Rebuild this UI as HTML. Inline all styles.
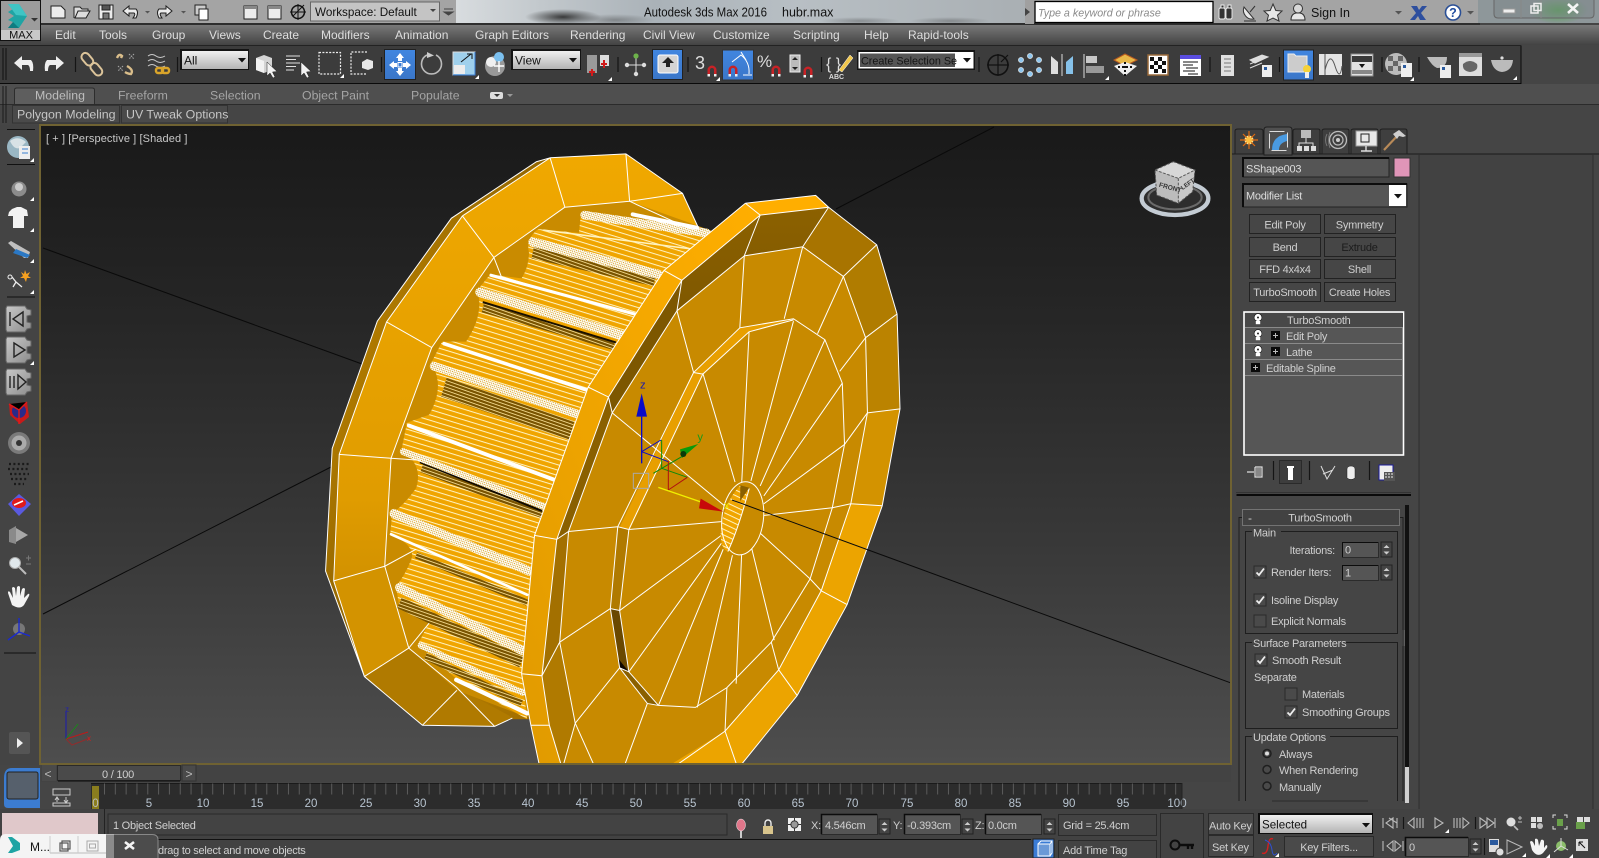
<!DOCTYPE html>
<html><head><meta charset="utf-8"><style>
html,body{margin:0;padding:0;background:#454545;width:1599px;height:858px;overflow:hidden}
svg{display:block}
text{font-family:"Liberation Sans",sans-serif;font-size:12px;fill:#d2d2d2}
.m{fill:#dedede;font-size:12px}
.t{fill:#111;font-size:12.5px}
.r{fill:#a5a5a5;font-size:12.3px}
.l{fill:#cfcfcf;font-size:11px;letter-spacing:-.25px}
.c{text-anchor:middle}
.e{text-anchor:end}
.w{fill:none;stroke:#fff;stroke-width:1;vector-effect:non-scaling-stroke}
.k{fill:none;stroke:#111;stroke-width:1}
.gb{fill:none;stroke:#1e1e1e;stroke-width:1}
.bt{fill:#464646;stroke:#222;stroke-width:1}
.inp{fill:#555;stroke:#2b2b2b}
.ic{fill:none;stroke:#e8e8e8;stroke-width:1.4}
.sep{stroke:#151515;stroke-width:1.2}
</style></head><body>
<svg width="1599" height="858" viewBox="0 0 1599 858" xmlns="http://www.w3.org/2000/svg">
<defs>
<linearGradient id="vp" x1="0" y1="0" x2="0" y2="1"><stop offset="0" stop-color="#191919"/><stop offset=".3" stop-color="#262626"/><stop offset=".65" stop-color="#383838"/><stop offset="1" stop-color="#4e4e4e"/></linearGradient>
<linearGradient id="menu" x1="0" y1="0" x2="0" y2="1"><stop offset="0" stop-color="#787878"/><stop offset="1" stop-color="#434343"/></linearGradient>
<linearGradient id="dd" x1="0" y1="0" x2="0" y2="1"><stop offset="0" stop-color="#f0f0f0"/><stop offset="1" stop-color="#b4b4b4"/></linearGradient>
<linearGradient id="glass" x1="0" y1="0" x2="1" y2="0"><stop offset="0" stop-color="#d8dcdf"/><stop offset=".15" stop-color="#c2c8cc"/><stop offset=".35" stop-color="#aab2b8"/><stop offset=".6" stop-color="#b8bfc4"/><stop offset="1" stop-color="#a9afb3"/></linearGradient>
<radialGradient id="blob"><stop offset="0" stop-color="#2a2a2a" stop-opacity=".9"/><stop offset="1" stop-color="#2a2a2a" stop-opacity="0"/></radialGradient>
<radialGradient id="gblob"><stop offset="0" stop-color="#4ea64a"/><stop offset="1" stop-color="#4ea64a" stop-opacity="0"/></radialGradient>
<linearGradient id="ring" x1="0" y1="0" x2="0" y2="1"><stop offset="0" stop-color="#f0a800"/><stop offset=".6" stop-color="#e09c00"/><stop offset=".85" stop-color="#c88a00"/><stop offset="1" stop-color="#a06e00"/></linearGradient>
<linearGradient id="bev" x1="0" y1="0" x2="1" y2="1"><stop offset="0" stop-color="#d49300"/><stop offset=".55" stop-color="#8a6000"/><stop offset="1" stop-color="#6e4c00"/></linearGradient>
<linearGradient id="br" x1="0" y1="0" x2="0" y2="1"><stop offset="0" stop-color="#8c6100"/><stop offset="1" stop-color="#7f5800"/></linearGradient>
<linearGradient id="strip" x1="1" y1="0" x2="0" y2="1"><stop offset="0" stop-color="#ffae00"/><stop offset=".6" stop-color="#eda300"/><stop offset="1" stop-color="#e09a00"/></linearGradient>
<linearGradient id="blubtn" x1="0" y1="0" x2="0" y2="1"><stop offset="0" stop-color="#4186e0"/><stop offset="1" stop-color="#3a76c8"/></linearGradient>
<pattern id="hatch" patternUnits="userSpaceOnUse" width="30" height="13" patternTransform="rotate(16)"><rect width="30" height="13" fill="#f0a500"/><rect y="0" width="30" height="2.6" fill="#fff2c0"/></pattern>
<pattern id="hatchd" patternUnits="userSpaceOnUse" width="30" height="8" patternTransform="rotate(18)"><rect width="30" height="8" fill="#7a5400"/><rect y="0" width="30" height="2.2" fill="#f5dc90"/></pattern>
<pattern id="hatchw" patternUnits="userSpaceOnUse" width="5" height="5" patternTransform="rotate(18)"><rect width="5" height="5" fill="#fff"/><rect width="2.6" height="2.6" fill="#d49a10"/></pattern>
<g id="cr"><path d="M0 4L4 0V4Z" fill="#fff"/></g>
<g id="mag"><path d="M-4.5 5V-1A4.5 4.5 0 0 1 4.5 -1V5H2V-1A2 2 0 0 0 -2 -1V5Z" fill="#c82226"/><rect x="-4.5" y="3" width="2.5" height="2.5" fill="#eee"/><rect x="2" y="3" width="2.5" height="2.5" fill="#eee"/></g>
<linearGradient id="gg" x1="0" y1="0" x2="1" y2="1"><stop offset="0" stop-color="#c8c8c8"/><stop offset="1" stop-color="#8c8c8c"/></linearGradient>
<g id="gear"><path d="M-11 -13H7L9 -10L13 -9V-4L9 -3V3L13 4V9L9 10L7 13H-11L-12 11V-11Z" fill="url(#gg)" stroke="#666"/></g>
<g id="ch"><rect x="0" y="0" width="12" height="12" fill="#4a4a4a" stroke="#2a2a2a"/></g>
<g id="tick"><path d="M2.5 6.5L5 9L10 2.5" fill="none" stroke="#eee" stroke-width="1.8"/></g>
<g id="spin"><rect x="0" y="0" width="11" height="15" fill="#444" stroke="#222"/><path d="M2.5 6L5.5 3L8.5 6ZM2.5 9.5L5.5 12.5L8.5 9.5Z" fill="#ccc"/></g>
<g id="bulb"><circle cx="0" cy="-1.5" r="3.9" fill="#fff" stroke="#111" stroke-width=".6"/><rect x="-2.2" y="2" width="4.4" height="3.2" fill="#fff"/><circle cx="0" cy="-1.5" r="1" fill="#222"/></g>
<g id="plus"><rect x="-4.5" y="-4.5" width="9" height="9" fill="#0a0a0a"/><path d="M-2.5 0H2.5M0 -2.5V2.5" stroke="#bbb"/></g>
<clipPath id="vc"><rect x="41" y="126" width="1189" height="637"/></clipPath>
</defs>

<!-- base -->
<rect width="1599" height="858" fill="#454545"/>

<!-- title bar -->
<rect x="0" y="0" width="1599" height="23" fill="#a4a4a4"/>
<rect x="456" y="0" width="570" height="23" fill="url(#glass)"/>
<ellipse cx="563" cy="17" rx="38" ry="8" fill="url(#blob)"/>
<ellipse cx="615" cy="20" rx="40" ry="6" fill="url(#blob)" opacity=".4"/>
<ellipse cx="860" cy="21" rx="40" ry="4" fill="url(#blob)" opacity=".35"/>
<ellipse cx="950" cy="21" rx="40" ry="4" fill="url(#blob)" opacity=".35"/>
<rect x="1478" y="0" width="121" height="23" fill="#8e979a"/>
<ellipse cx="1558" cy="10" rx="30" ry="14" fill="url(#gblob)"/>
<rect x="0" y="23" width="1480" height="2" fill="#2e2e2e"/>
<path d="M1494 0V14Q1494 18 1498 18H1590Q1594 18 1594 14V0" fill="#7d878a" fill-opacity=".55" stroke="#666"/>
<path d="M1521 0V18M1541 0V18" stroke="#888"/>
<rect x="1503" y="9" width="12" height="4" fill="#eee" stroke="#999"/>
<rect x="1531" y="6" width="7" height="7" fill="none" stroke="#eee" stroke-width="1.5"/><rect x="1534" y="3.5" width="7" height="7" fill="none" stroke="#eee" stroke-width="1.5"/>
<path d="M1568 4L1578 13M1578 4L1568 13" stroke="#f4f4f4" stroke-width="2.6"/>

<text class="t" x="644" y="16.5" textLength="123" lengthAdjust="spacingAndGlyphs">Autodesk 3ds Max 2016</text>
<text class="t" x="782" y="16.5">hubr.max</text>
<rect x="1025" y="0" width="9" height="24" fill="#a0a0a0"/><path d="M1025 8L1030 12L1025 16Z" fill="#444"/>
<rect x="1035" y="1.5" width="178" height="21" fill="#fff" stroke="#000" stroke-width="1.3"/>
<text x="1038" y="16.5" style="font-style:italic;font-size:10.7px;fill:#8a8a8a">Type a keyword or phrase</text>
<!-- right title icons -->
<g fill="#333" stroke="#eee" stroke-width=".9">
<rect x="1219" y="8" width="6" height="11" rx="1.5"/><rect x="1226" y="8" width="6" height="11" rx="1.5"/><path d="M1221 5H1224V8H1221ZM1228 5H1231V8H1228Z"/>
</g>
<path d="M1244 7A9 9 0 0 0 1254 19L1244 7ZM1250 12L1255 6M1244 21H1256" fill="#e8e8e8" stroke="#333"/>
<path d="M1273 4L1275.8 10.5L1282 11L1277.5 15.2L1279 21L1273 18L1267 21L1268.5 15.2L1264 11L1270.2 10.5Z" fill="#e6e6e6" stroke="#333"/>
<circle cx="1298" cy="8.5" r="4.5" fill="#d8d8d8" stroke="#333"/><path d="M1291 20Q1291 14 1296 13H1300Q1305 14 1305 20Z" fill="#e6e6e6" stroke="#333"/>
<text class="t" x="1311" y="17">Sign In</text>
<path d="M1395 11H1402L1398.5 14.5Z" fill="#555"/>
<path d="M1411 6H1417L1419 10L1422 6H1427L1421 13L1426 20H1420L1418 16L1415 20H1410L1416 13Z" fill="#2e4f9e"/>
<circle cx="1453" cy="12.5" r="7.5" fill="#fff" stroke="#2a4f96" stroke-width="1.6"/><text x="1453" y="17" class="c" style="fill:#1f4ca0;font-weight:bold;font-size:12.5px">?</text>
<path d="M1467 11H1474L1470.5 14.5Z" fill="#555"/>

<!-- left title icons -->
<g fill="#ececec" stroke="#222" stroke-width="1">
<path d="M51 6H61L65 10V18H51Z"/>
<path d="M74 18V7H80L82 9H88V11H78L75 18H86L90 11H79" fill="#ddd"/>
<rect x="99" y="5" width="14" height="14"/><rect x="102" y="5" width="8" height="5" fill="#555"/><rect x="103" y="13" width="6" height="6" fill="#777"/>
<path d="M123 11L129 6V9H136Q139 12 136 18H133Q136 14 134 13H129V16Z"/>
<path d="M172 11L166 6V9H159Q156 12 159 18H162Q159 14 161 13H166V16Z"/>
<rect x="195" y="5" width="11" height="10" fill="#ccc"/><rect x="199" y="9" width="9" height="11" fill="#fff"/>
<rect x="244" y="6" width="13" height="13"/><rect x="268" y="6" width="13" height="13"/>
</g>
<path d="M244 6H257V9H244ZM268 6H281V9H268Z" fill="#888"/>
<path d="M145 11H150L147.5 13.5ZM181 11H186L183.5 13.5Z" fill="#555"/>
<circle cx="298" cy="12" r="6.5" fill="none" stroke="#111" stroke-width="1.5"/><path d="M290 12H306M298 4V20M293 16L304 5" stroke="#111"/>
<rect x="310.5" y="2" width="129" height="19" fill="#c4c4c4" stroke="#666"/>
<text x="315" y="16" style="fill:#111;font-size:11.7px">Workspace: Default</text>
<path d="M430 9H436L433 12Z" fill="#444"/>
<path d="M444 9H453M444 12H453L448.5 15Z" fill="#444" stroke="#444"/>

<!-- app button -->
<rect x="0.5" y="0.5" width="40" height="40" fill="#a9a9a9" stroke="#111"/>
<rect x="1" y="1" width="39" height="29" fill="#9c9c9c"/>
<rect x="1" y="30" width="39" height="10" fill="#c8c8c8"/>
<path d="M8 4H19L27 16L19 28H8L13 22L8 20L14 16L8 12L13 9Z" fill="#1fa4a4"/><path d="M8 4H19L27 16L16 15Z" fill="#3fc4c4"/><path d="M13 22L19 28H8Z" fill="#0e7c80"/>
<path d="M31 18H38L34.5 21.5Z" fill="#333"/>
<text x="21" y="38.5" class="c" style="fill:#111;font-size:11px">MAX</text>

<!-- menu bar -->
<rect x="41" y="25" width="1558" height="20" fill="url(#menu)"/>
<rect x="0" y="41" width="41" height="4" fill="#454545"/>
<text class="m" x="55" y="39">Edit</text><text class="m" x="99" y="39">Tools</text><text class="m" x="152" y="39">Group</text><text class="m" x="209" y="39">Views</text><text class="m" x="263" y="39">Create</text><text class="m" x="321" y="39">Modifiers</text><text class="m" x="395" y="39">Animation</text><text class="m" x="475" y="39">Graph Editors</text><text class="m" x="570" y="39">Rendering</text><text class="m" x="643" y="39">Civil View</text><text class="m" x="713" y="39">Customize</text><text class="m" x="793" y="39">Scripting</text><text class="m" x="864" y="39">Help</text><text class="m" x="908" y="39">Rapid-tools</text>

<!-- toolbar -->
<rect x="0" y="45" width="1521" height="38" fill="#3c3c3c"/>
<rect x="1521" y="45" width="78" height="38" fill="#454545"/>
<path d="M0 83.5H1521V45.5" stroke="#0a0a0a" fill="none"/>
<rect x="0" y="45" width="1521" height="1" fill="#222"/>
<path d="M3 48V80M6 48V80" stroke="#111"/>
<path d="M14 63L22 56V60H31Q34 63 33 71H30Q30 66 28 65H22V70Z" fill="#eee"/>
<path d="M64 63L56 56V60H47Q44 63 45 71H48Q48 66 50 65H56V70Z" fill="#eee"/>
<line class="sep" x1="75.5" y1="57" x2="75.5" y2="72"/>
<g fill="none" stroke="#dcc49a" stroke-width="2"><rect x="-4" y="-8" width="8" height="14" rx="4" transform="translate(88 60) rotate(-40)"/><rect x="-4" y="-8" width="8" height="14" rx="4" transform="translate(97 70) rotate(-40)"/></g>
<path d="M117 58Q119 53 122 56L121 58M127 66Q134 70 131 74Q128 74 125 72" fill="none" stroke="#d9bd8a" stroke-width="2.4"/>
<path d="M129 54L134 59M134 54L129 59M118 66L123 71M123 66L118 71" stroke="#aaa" stroke-dasharray="1.5 1"/>
<path d="M148 56Q152 53 156 56T165 56M148 61Q152 58 156 61T165 61M148 66Q152 63 156 66T165 66" fill="none" stroke="#ccc"/>
<g fill="none" stroke="#d9a42a" stroke-width="2.4"><rect x="156" y="68" width="7" height="5" rx="2"/><rect x="162" y="68" width="7" height="5" rx="2"/></g>
<line class="sep" x1="177.5" y1="57" x2="177.5" y2="72"/>
<rect x="180" y="49" width="69" height="21" fill="#141414"/><rect x="182" y="51" width="66" height="18" fill="url(#dd)"/>
<text x="184" y="64.5" style="fill:#111;font-size:12px">All</text><path d="M238 58H246L242 62.5Z" fill="#111"/>
<path d="M256 58L264 55L272 58V70L264 73L256 70Z" fill="#d4d4d4"/><path d="M256 58L264 61V73L256 70Z" fill="#f2f2f2"/>
<path d="M267 62V76L270 73L273 78L275 77L272.5 72L277 71.5Z" fill="#f2f2f2" stroke="#222" stroke-width=".5"/>
<path d="M286 56H300M286 59.5H296M286 63H300M286 66.5H296M286 70H294" stroke="#e0e0e0"/>
<path d="M301 62V76L304 73L307 78L309 77L306.5 72L311 71.5Z" fill="#f2f2f2" stroke="#222" stroke-width=".5"/>
<rect x="319" y="52.5" width="21.5" height="21.5" fill="none" stroke="#eee" stroke-dasharray="2 1.4" stroke-width="1.2"/><use href="#cr" x="340" y="74"/>
<path d="M367 52H351V74H367" fill="none" stroke="#eee" stroke-dasharray="2 1.4" stroke-width="1.2"/>
<path d="M362 62L367 59L373 61V68L368 70L362 68Z" fill="#e8e8e8"/>
<line class="sep" x1="381.5" y1="57" x2="381.5" y2="72"/>
<rect x="384.5" y="49.5" width="31" height="30" fill="url(#blubtn)" stroke="#222"/>
<path d="M400 53L404 58H402V61H398V58H396ZM400 76L396 71H398V68H402V71H404ZM389 65L394 61V63H397V67H394V69ZM411 65L406 69V67H403V63H406V61Z" fill="#fff"/><rect x="398" y="62.5" width="4" height="4.5" fill="#3a7bd5" stroke="#fff"/>
<path d="M436 55A10 10 0 1 1 427 55" fill="none" stroke="#bbb" stroke-width="1.6"/><path d="M427 52L434 55.5L427 58Z" fill="#ccc"/>
<rect x="453" y="52" width="22" height="23" fill="#9fd0ec" stroke="#ddd"/><rect x="454" y="65" width="11" height="9" fill="#ececec"/><path d="M461 62L471 54M467 54H472V59" stroke="#111" fill="none"/><path d="M475 52V75H453" stroke="#3a7bd5" fill="none"/><use href="#cr" x="475" y="75"/>
<circle cx="495" cy="66" r="10" fill="#999"/><circle cx="491" cy="62" r="5" fill="#f0f0f0"/><circle cx="499" cy="57" r="5" fill="#7bc0ef"/><path d="M499 61V72M494 66H504" stroke="#fff" stroke-width="1.4"/>
<rect x="511" y="49" width="70" height="21" fill="#141414"/><rect x="513" y="51" width="67" height="18" fill="url(#dd)"/>
<text x="515" y="64.5" style="fill:#111;font-size:12px">View</text><path d="M569 58H577L573 62.5Z" fill="#111"/>
<rect x="587" y="55" width="10" height="18" fill="#9a9a9a"/><rect x="600" y="55" width="9" height="11" fill="#ddd"/><path d="M592 69V76M589 72H595M604 60V68M601 64H607" stroke="#d01a1a" stroke-width="2"/><use href="#cr" x="608" y="77"/>
<line class="sep" x1="618" y1="57" x2="618" y2="72"/>
<path d="M627 65H645M636 57V72" stroke="#ddd"/><circle cx="636" cy="56" r="2.6" fill="#6db34a"/><circle cx="627" cy="65" r="2.2" fill="#ddd"/><circle cx="644" cy="65" r="2.2" fill="#ddd"/><circle cx="636" cy="74" r="2.2" fill="#ddd"/>
<rect x="652.5" y="49.5" width="30" height="30" fill="url(#blubtn)" stroke="#222"/><rect x="658" y="55" width="20" height="18" rx="2" fill="#d4d4d4" stroke="#fff"/><path d="M668 57L674 63H670V67H666V63H662Z" fill="#222"/>
<line class="sep" x1="688" y1="57" x2="688" y2="72"/>
<text x="695" y="69" style="font-size:18px;fill:#ddd">3</text><use href="#mag" x="712" y="71"/><use href="#cr" x="716" y="77"/>
<rect x="722.5" y="50" width="31" height="30" fill="url(#blubtn)" stroke="#333"/><use href="#mag" x="733" y="71"/><path d="M732 62L741 55Q750 62 749 74M743 75H752" fill="none" stroke="#fff"/><path d="M741 52L746 60" stroke="#fff"/>
<text x="757" y="67" style="font-size:17px;fill:#ddd">%</text><use href="#mag" x="776" y="71"/>
<rect x="790" y="55" width="10" height="17" fill="#bbb" stroke="#eee"/><path d="M792 60L795 57L798 60ZM792 67L795 70L798 67Z" fill="#222"/><use href="#mag" x="808" y="72"/>
<line class="sep" x1="821.5" y1="57" x2="821.5" y2="72"/>
<text x="826" y="69" style="font-size:16px;fill:#ddd">{ }</text><path d="M839 70L850 55L853 58L842 72Z" fill="#f2c84c" stroke="#fff" stroke-width=".5"/><text x="836.5" y="79" class="c" style="font-size:7px;fill:#ddd;font-weight:bold">ABC</text>
<rect x="857" y="50" width="118" height="20" fill="#141414"/><rect x="858.5" y="52" width="115" height="16.5" fill="#fff"/><rect x="860" y="53.5" width="95" height="13.5" fill="#555"/>
<text x="861" y="64.5" style="fill:#151515;font-size:10.8px">Create Selection Se</text><path d="M963 58H971L967 62.5Z" fill="#111"/>
<line class="sep" x1="979" y1="57" x2="979" y2="72"/>
<circle cx="998" cy="65" r="10" fill="none" stroke="#111" stroke-width="1.6"/><path d="M987 65H1009M998 54V76M1001 62L1008 55" stroke="#111" stroke-width="1.2"/>
<g fill="#8ec6ee" stroke="#eee" stroke-width=".6"><circle cx="1021" cy="60" r="2.6"/><circle cx="1030" cy="56" r="2.6"/><circle cx="1039" cy="60" r="2.6"/><circle cx="1021" cy="70" r="2.6"/><circle cx="1030" cy="74" r="2.6"/><circle cx="1039" cy="70" r="2.6"/></g>
<path d="M1051 56L1058 62V74H1051Z" fill="#ddd"/><path d="M1073 56L1066 62V74H1073Z" fill="#86c2ea"/><path d="M1062 54V76" stroke="#ddd"/>
<path d="M1084 54V78" stroke="#ddd"/><rect x="1086" y="56" width="11" height="7" fill="#c8c8c8"/><rect x="1086" y="66" width="18" height="7" fill="#999"/><use href="#cr" x="1105" y="76"/>
<path d="M1125 54L1137 60L1125 66L1114 60Z" fill="#e8b848" stroke="#b85a20"/><path d="M1114 66L1125 62L1137 66L1125 76Z" fill="#eee"/><path d="M1118 67H1132M1125 62V76" stroke="#111" stroke-width="2" stroke-dasharray="2 2"/>
<rect x="1148" y="55" width="20" height="20" fill="#fff" stroke="#9a6a3a" stroke-width="1.5"/><path d="M1150 57h4v4h-4zM1158 57h4v4h-4zM1154 61h4v4h-4zM1162 61h4v4h-4zM1150 65h4v4h-4zM1158 65h4v4h-4zM1154 69h4v4h-4zM1162 69h4v4h-4z" fill="#111"/>
<rect x="1180" y="55" width="21" height="21" fill="#fff"/><rect x="1180" y="55" width="21" height="4" fill="#5a4de0"/><path d="M1183 62H1198M1183 65H1193M1186 68H1198M1183 71H1195M1188 74H1198" stroke="#111"/>
<line class="sep" x1="1210" y1="57" x2="1210" y2="72"/>
<rect x="1221" y="55" width="13" height="21" fill="#e0e0e0"/><path d="M1224 59h7M1224 63h7M1224 67h7M1224 71h7" stroke="#777"/>
<path d="M1250 60L1262 55L1268 57L1255 63ZM1250 64L1262 59M1250 68L1262 63" fill="#ddd" stroke="#ddd"/><rect x="1262" y="65" width="10" height="12" fill="#eee"/><rect x="1264" y="67" width="3" height="3" fill="#2a5a9e"/>
<line class="sep" x1="1279.5" y1="57" x2="1279.5" y2="72"/>
<rect x="1283.5" y="50" width="30" height="30" fill="url(#blubtn)" stroke="#222"/><path d="M1288 60V72H1307V56H1296L1294 54H1288Z" fill="#ccc" stroke="#eee"/><circle cx="1307" cy="69" r="4" fill="#f5d23a"/><rect x="1305" y="72" width="4" height="6" fill="#eee"/>
<rect x="1319" y="54" width="23" height="21" fill="#e4e4e4"/><path d="M1325 54V75M1325 70Q1330 50 1335 66T1342 66" fill="none" stroke="#555"/>
<rect x="1351" y="54" width="22" height="22" fill="#e2e2e2" stroke="#888"/><rect x="1352" y="56" width="20" height="6" fill="#3a3a3a"/><rect x="1352" y="70" width="20" height="4" fill="#888"/><path d="M1359 64H1365L1362 68Z" fill="#111"/>
<line class="sep" x1="1382" y1="57" x2="1382" y2="72"/>
<circle cx="1396" cy="64" r="11" fill="#bbb"/><path d="M1388 56h5v5h-5zM1398 56h5v5h-5zM1393 61h5v5h-5zM1388 66h5v5h-5zM1398 66h5v5h-5z" fill="#666"/><rect x="1401" y="63" width="11" height="14" fill="#eee"/><rect x="1403" y="65" width="3" height="3" fill="#2a5a9e"/><use href="#cr" x="1410" y="77"/>
<line class="sep" x1="1419" y1="57" x2="1419" y2="72"/>
<path d="M1427 57H1447Q1447 68 1437 68Q1432 66 1427 57Z" fill="#bbb"/><rect x="1440" y="65" width="11" height="13" fill="#eee"/><rect x="1442" y="67" width="3" height="3" fill="#2a5a9e"/>
<rect x="1459" y="53" width="23" height="23" fill="#ddd"/><rect x="1459" y="53" width="23" height="4" fill="#999"/><path d="M1463 64Q1470 58 1477 64Q1479 71 1470 72Q1462 71 1463 64Z" fill="#666"/>
<path d="M1491 60H1513Q1512 71 1502 72Q1493 71 1491 60Z" fill="#bbb"/><circle cx="1502" cy="58" r="1.6" fill="#ddd"/><use href="#cr" x="1513" y="76"/>

<!-- ribbon -->
<rect x="0" y="84" width="1599" height="20" fill="#4f4f4f"/>
<rect x="0" y="104" width="1599" height="1" fill="#2b2b2b"/>
<rect x="0" y="105" width="1599" height="19" fill="#454545"/>
<path d="M3 86V123M6 86V123" stroke="#1a1a1a"/>
<path d="M14.5 104V90Q14.5 88 17 88H92Q94.5 88 94.5 90V104" fill="#5e5e5e" stroke="#2d2d2d"/>
<text class="r c" x="60" y="99.5" style="fill:#bdbdbd">Modeling</text>
<text class="r" x="118" y="99.5">Freeform</text><text class="r" x="210" y="99.5">Selection</text><text class="r" x="302" y="99.5">Object Paint</text><text class="r" x="411" y="99.5">Populate</text>
<rect x="490" y="92" width="13" height="7" rx="2" fill="#ddd"/><path d="M494 94H500L497 97Z" fill="#333"/><path d="M507 94H513L510 97Z" fill="#999"/>
<rect x="12.5" y="105.5" width="107" height="17.5" fill="#4a4a4a" stroke="#333"/><rect x="121.5" y="105.5" width="106" height="17.5" fill="#4a4a4a" stroke="#333"/>
<text x="17" y="118.5" style="font-size:12.4px;fill:#c6c6c6">Polygon Modeling</text><text x="126" y="118.5" style="font-size:12.4px;fill:#c6c6c6">UV Tweak Options</text>

<!-- viewport -->
<rect x="40" y="125" width="1191" height="639" fill="url(#vp)" stroke="#6f6232" stroke-width="2"/>
<g clip-path="url(#vc)">
<path d="M43 248L362 364M43 614L331 467M836 209L994 127" stroke="#0a0a0a" fill="none"/>
<text x="46" y="142" style="font-size:11px;fill:#c8c8c8;letter-spacing:.1px">[ + ] [Perspective ] [Shaded ]</text>

<!-- gear -->
<svg x="320" y="140" width="580" height="620" viewBox="0 0 1568 1568" preserveAspectRatio="none" overflow="visible">
<!-- back disk -->
<path d="M622 45L827 35L980 135L1025 225L570 1465L500 1465L472 1483L277 1480L120 1357L15 1090L33 780L155 458L355 198L585 55Z" fill="url(#ring)"/>
<path d="M622 45L585 55L355 198L155 458L33 780L15 1090L120 1357L37 1115L52 795L180 460L385 192Z" fill="url(#bev)"/>
<path d="M277 1480L472 1483L520 1460L370 1385L240 1285L120 1357Z" fill="#b07a00"/>
<path d="M120 1357L240 1285L175 1078L37 1115Z" fill="#d39300"/>
<!-- cavity -->
<path d="M662 170L837 155L1060 230L560 1460L370 1392L240 1285L175 1078L192 805L302 525L470 297Z" fill="#c98b00"/>
<!-- hatch teeth -->
<path d="M705 190L700 235L590 225Q555 250 565 285Q565 320 545 350L460 340L425 380Q445 440 395 510L330 510L300 565Q340 620 295 695L235 715L220 785Q280 820 260 880Q235 915 195 945L190 995Q265 1030 245 1065Q230 1100 205 1130L215 1180Q290 1200 295 1220L265 1275L365 1360L560 1465L545 1350L580 1000L725 625L930 330L1060 230Z" fill="url(#hatch)"/>
<!-- shaded bands -->
<g fill="none" stroke-linecap="butt">
<path d="M575 285L905 355" stroke="url(#hatchd)" stroke-width="30"/>
<path d="M440 425L795 520" stroke="url(#hatchd)" stroke-width="22"/>
<path d="M335 625L680 735" stroke="url(#hatchd)" stroke-width="50"/>
<path d="M275 830L600 945" stroke="url(#hatchd)" stroke-width="22"/>
<path d="M260 1050L560 1170" stroke="url(#hatchd)" stroke-width="16"/>
<path d="M215 1170L545 1320" stroke="url(#hatchd)" stroke-width="30"/>
<path d="M285 1305L545 1425" stroke="url(#hatchd)" stroke-width="18"/>
</g>
<path d="M440 410L800 512" stroke="#1a1000" stroke-width="5"/>
<path d="M270 815L600 938" stroke="#100a00" stroke-width="5"/>
<!-- ridges -->
<g fill="none" stroke-linecap="round">
<path d="M715 190L1045 235" stroke="url(#hatchw)" stroke-width="22"/><path d="M845 188L1020 222" stroke="#fff" stroke-width="10"/>
<path d="M575 258L915 340" stroke="url(#hatchw)" stroke-width="24"/><path d="M605 228L1000 275" stroke="#fff3c0" stroke-width="4"/>
<path d="M432 385L820 495" stroke="url(#hatchw)" stroke-width="24"/><path d="M462 342L850 440" stroke="#fff" stroke-width="8"/>
<path d="M308 572L695 693" stroke="url(#hatchw)" stroke-width="22"/><path d="M335 515L720 632" stroke="#fff" stroke-width="9"/>
<path d="M225 788L608 928" stroke="url(#hatchw)" stroke-width="18"/><path d="M240 722L635 860" stroke="#fff" stroke-width="10"/>
<path d="M200 945L565 1090" stroke="url(#hatchw)" stroke-width="24"/><path d="M192 997L560 1150" stroke="#fff" stroke-width="7"/>
<path d="M215 1132L545 1290" stroke="url(#hatchw)" stroke-width="24"/>
<path d="M272 1278L548 1398" stroke="url(#hatchw)" stroke-width="16"/>
<path d="M368 1365L560 1450" stroke="#fff" stroke-width="11"/>
</g>
<!-- back wire -->
<path class="w" d="M622 45L827 35L980 135L1022 220M622 45L585 55L355 198L155 458L33 780L15 1090L120 1357L277 1480L472 1483L520 1462M385 192L180 460L52 795L37 1115L120 1357M622 45L385 192M622 45L662 170M827 35L837 155M980 135L837 155L1000 225M662 170L837 155M662 170L470 297L302 525L192 805L175 1078L240 1285L370 1385L472 1483M385 192L470 297M180 460L302 525M52 795L192 805M37 1115L175 1078M120 1357L240 1285M277 1480L370 1392M470 297L490 345M192 805L270 810M175 1078L260 1035M240 1285L295 1222"/>

<!-- front disk -->
<path d="M1150 160L1340 140L1375 170L1505 265L1560 440L1568 680L1520 925L1425 1175L1290 1405L1130 1590L595 1590L570 1480L545 1350L580 1000L725 625L930 330Z" fill="#c88a00"/>
<path d="M1375 170L1505 265L1415 345L1305 270Z" fill="#a87400"/><path d="M1505 265L1560 440L1475 500L1415 345Z" fill="#b07c00"/><path d="M1560 440L1568 680L1480 690L1475 500Z" fill="#bb8300"/><path d="M1568 680L1520 925L1435 920L1480 690Z" fill="#d39300"/>
<path d="M1520 925L1425 1175L1290 1405L1130 1590L930 1590L1095 1495L1240 1340L1355 1140L1435 920Z" fill="#eca400"/>
<path d="M1150 160L1340 140L1375 170L1190 190Z" fill="#ffae00"/>
<path d="M1150 160L930 330L725 625L580 1000L545 1350L570 1480L595 1590L660 1590L620 1480L600 1355L640 1010L780 650L978 355L1190 190Z" fill="url(#strip)"/>
<path d="M1190 190L1375 170L1305 270L1147 293L965 432L978 355Z" fill="url(#br)"/>
<path d="M978 355L965 432L790 690L780 650Z" fill="#7d5700"/>
<path d="M780 650L790 690L672 990L640 1010Z" fill="#8a6000"/>
<path d="M640 1010L672 990L648 1270L600 1355Z" fill="#a37000"/>
<path d="M600 1355L648 1270L690 1475L655 1590L620 1480Z" fill="#b07a00"/>
<path d="M1147 293L1305 270L1255 452L1135 475ZM1305 270L1415 345L1345 490L1280 455ZM965 432L1147 293L1135 475L1010 588Z" fill="#c88a00"/>
<!-- recess lip -->
<path d="M1135 475L1280 452L1162 485L1035 592L1010 588Z" fill="#e89f00"/>
<path d="M1010 588L1035 592L835 990L810 980Z" fill="#e89f00"/>
<path d="M805 980L835 985L810 1190L785 1185Z" fill="#b07a00"/>
<path d="M785 1185L810 1190L835 1345L810 1335Z" fill="#6a4800"/>
<path d="M805 1310L835 1345L812 1335Z" fill="#100800"/>
<path d="M810 1335L835 1345L915 1430L885 1425Z" fill="#8a6000"/>
<!-- face wire -->
<path class="w" d="M1150 160L1340 140L1375 170L1505 265L1560 440L1568 680L1520 925L1425 1175L1290 1405L1130 1590M1150 160L930 330L725 625L580 1000L545 1350L570 1480L595 1590M1150 160L1190 190L1375 170M930 330L978 355L1190 190M725 625L780 650L978 355M580 1000L640 1010L780 650M545 1350L600 1355L640 1010M570 1480L620 1480L600 1355M620 1480L655 1590"/>
<path class="w" d="M1147 293L1305 270L1415 345L1475 500L1480 690L1435 920L1355 1140L1240 1340L1095 1495L950 1590M965 432L1147 293M978 355L965 432L790 690L780 650M790 690L672 990L640 1010M672 990L648 1270L600 1355M648 1270L690 1475L655 1590M1190 190L1147 293M1375 170L1305 270M1505 265L1415 345M1560 440L1475 500M1568 680L1480 690M1520 925L1435 920M1425 1175L1355 1140M1290 1405L1240 1340M1095 1495L1130 1590"/>
<path class="w" d="M1135 475L1280 452L1365 505L1412 615L1418 770L1385 930L1325 1110L1220 1270L1100 1385L1015 1435L915 1430L835 1345L810 1190L835 985L1035 592L1160 485L1280 455M1135 475L1010 588L1035 592M1010 588L805 978L835 985M805 978L785 1185L810 1190M785 1185L810 1335L835 1345M810 1335L885 1425L915 1430"/>
<path class="w" d="M1147 293L1135 475M1305 270L1255 452M965 432L1010 588M790 690L1100 930M672 990L805 978M648 1270L785 1185M690 1475L810 1335M885 1425L820 1590M690 1475L745 1590M1100 1385L1095 1495M1220 1270L1240 1340M1325 1110L1355 1140M1385 930L1435 920M1418 770L1480 690M1405 585L1475 500M1345 490L1415 345"/>
<!-- spokes -->
<path class="w" d="M1122 865L1035 590M1140 868L1160 485M1165 862L1280 458M1190 875L1365 505M1200 900L1412 615M1200 920L1418 770M1195 950L1385 930M1185 990L1325 1110M1165 1025L1228 1265M1140 1045L1125 1375M1115 1050L1020 1435M1090 1035L915 1430M1085 1020L835 1345M1085 1000L810 1190M1085 965L835 985"/>
<!-- hub -->
<g transform="rotate(8 1145 955)">
<ellipse cx="1143" cy="957" rx="56" ry="93" fill="#c88a00"/>
<path d="M1125 875Q1090 920 1088 985Q1090 1040 1115 1046Q1135 985 1150 880Z" fill="url(#hatch)"/>
<path d="M1125 875L1150 878L1130 915Z" fill="#8a6000"/>
<path class="w" d="M1150 880Q1135 985 1115 1046"/>
<ellipse cx="1143" cy="957" rx="56" ry="93" class="w"/>
</g>
</svg>
<!-- axis line over model -->
<path d="M732 500L1231 683" stroke="#0a0a0a" fill="none"/>

<!-- gizmo -->
<g transform="translate(600 360) scale(.3333)">
<g fill="none" stroke-width="3">
<path d="M125 310V170" stroke="#0a0ac8" stroke-width="4"/>
<path d="M125 275L183 240M125 275L205 305" stroke="#0a0ac8"/>
<path d="M185 240V325M160 340L245 290M185 325L262 352" stroke="#0a8a0a"/>
<path d="M205 302V390L262 352" stroke="#b01010"/>
<path d="M175 382L300 425" stroke="#f0f000" stroke-width="4"/>
</g>
<path d="M125 100L141 170H109Z" fill="#0a0ac8"/>
<path d="M295 252L246 294L240 268Z" fill="#0a9a0a"/><circle cx="250" cy="282" r="9" fill="#0a3a0a"/>
<path d="M370 455L302 416L297 445Z" fill="#c80a0a"/>
<text x="120" y="85" style="font-size:34px;fill:#1a1ab0">z</text>
<text x="292" y="242" style="font-size:34px;fill:#1a9a1a">y</text>
<text x="372" y="447" style="font-size:32px;fill:#f0f000">x</text>
<rect x="100" y="340" width="46" height="45" fill="none" stroke="#aaa" stroke-width="3"/>
</g>

<!-- world axis -->
<g fill="none"><path d="M66 739V712" stroke="#1a1ab0"/><path d="M66 739L88 732" stroke="#c01818"/><path d="M66 739L78 724" stroke="#188a18"/><path d="M66 739L72 745L90 738" stroke="#c01818" stroke-opacity=".6"/></g>
<text x="65" y="712" style="font-size:8px;fill:#2222aa">z</text><text x="87" y="741" style="font-size:8px;fill:#cc2222">x</text>

<!-- viewcube -->
<g transform="translate(1100 140) scale(.3333)">
<ellipse cx="225" cy="175" rx="100" ry="50" fill="#2e2e2e" stroke="#c4ccd4" stroke-width="13"/>
<ellipse cx="225" cy="172" rx="80" ry="36" fill="none" stroke="#6a6a6a" stroke-width="6"/>
<path d="M220 65L285 90L235 115L165 90Z" fill="#d8d8d8"/>
<path d="M165 90L235 115V190L170 165Z" fill="#bcbcbc"/>
<path d="M235 115L285 90L278 155L235 190Z" fill="#c8c8c8"/>
<path d="M220 65L285 90L278 155L235 190L170 165L165 90ZM165 90L235 115L285 90M235 115V190" fill="none" stroke="#555" stroke-width="3" stroke-dasharray="8 5"/>
<text x="176" y="140" transform="rotate(15 176 140)" style="font-size:20px;fill:#333;font-weight:bold">FRONT</text>
<text x="248" y="150" transform="rotate(-35 248 150)" style="font-size:18px;fill:#333;font-weight:bold">LEFT</text>
</g>
</g>

<!-- left panel -->
<rect x="0" y="125" width="39" height="640" fill="#444"/>
<path d="M7 129.5H35M7 164.5H35M7 297H35M4 653H36" stroke="#111"/>
<circle cx="18" cy="147" r="11" fill="#9ab7c4"/><path d="M10 141Q18 135 26 142L20 148Q14 150 10 141Z" fill="#d8e2e6"/><rect x="19" y="146" width="11" height="13" fill="#eee"/><path d="M22 149h6M22 153h6" stroke="#3a80d0"/><use href="#cr" x="30" y="158"/>
<circle cx="19" cy="189" r="7.5" fill="#8c8c8c"/><circle cx="19" cy="187" r="4" fill="#ccc"/><use href="#cr" x="30" y="197"/>
<path d="M12 209L17 207H21L27 210L28 216L24 216V228H13V216L8 216L9 212Z" fill="#f2f2f2"/><use href="#cr" x="30" y="228"/>
<path d="M8 243L11 241L30 252L28 258L24 258Z" fill="#bfbfbf"/><path d="M16 249L30 255L27 258L13 253Z" fill="#2b78c4"/><use href="#cr" x="30" y="259"/>
<path d="M12 277L16 282L13 287M16 282L22 287" stroke="#eee" fill="none" stroke-width="1.3"/><circle cx="10" cy="277" r="2" fill="none" stroke="#eee"/><path d="M25 270L26.5 274L30 272L28 276L31 278L27 278L26 282L24 278L20 278L23 276L21 272L24 274Z" fill="#f5a020"/><use href="#cr" x="30" y="290"/>
<use href="#gear" x="18" y="319"/><path d="M10 312V326M23 312L13 319L23 326Z" fill="none" stroke="#222" stroke-width="1.4"/>
<use href="#gear" x="18" y="350"/><path d="M14 343L25 350L14 357Z" fill="none" stroke="#222" stroke-width="1.4"/><use href="#cr" x="30" y="361"/>
<use href="#gear" x="18" y="382"/><path d="M10 376V388M14 376V388M18 375L26 382L18 389Z" fill="none" stroke="#222" stroke-width="1.4"/>
<path d="M9 404L27 402L29 417L20 424L10 415Z" fill="#c81a1a"/><circle cx="19" cy="411" r="7" fill="#2a2a8a"/><path d="M9 404L19 410L27 402M19 410V424" stroke="#e01a1a" stroke-width="1.4"/>
<circle cx="19" cy="443" r="11" fill="#7a7a7a"/><circle cx="19" cy="443" r="7.5" fill="#aaa"/><circle cx="19" cy="443" r="3" fill="#333"/>
<g stroke="#1a1a1a" stroke-width="2.2" stroke-dasharray="2 2.4"><path d="M9 464H29"/><path d="M8 469H30"/><path d="M10 474H29"/><path d="M11 479H27"/><path d="M14 484H24"/></g>
<path d="M8 504L19 494L31 504L19 516Z" fill="#5a5ae0"/><ellipse cx="19" cy="503" rx="7" ry="5" fill="#e01a1a"/><path d="M14 505L23 501" stroke="#fff" stroke-width="1.6"/>
<path d="M9 530L16 526V544L9 542Z" fill="#8a8a8a"/><path d="M16 528L28 535L16 542Z" fill="#a8a8a8"/>
<circle cx="15" cy="563" r="5.5" fill="#e0e8ec" stroke="#aaa"/><path d="M19 567L26 574" stroke="#bbb" stroke-width="2"/><path d="M26 558H31M28.5 555.5V560.5M26 564H31" stroke="#777"/>
<path transform="translate(0 4)" d="M12 601L8 589Q8 586 10 588L13 594L12 584Q13 582 15 584L16 592L17 583Q19 581 20 583L20 592L22 585Q24 583 25 585L24 594L28 590Q30 589 29 592L24 601Q20 606 12 601Z" fill="#f4f4f4"/>
<circle cx="19" cy="629" r="6" fill="#777"/><path d="M19 632L8 640M19 632L30 636M19 632V618" stroke="#1a2ad0" stroke-width="1.4"/>
<rect x="9" y="732" width="21" height="22" rx="2" fill="#555"/><path d="M17 738L23 743L17 748Z" fill="#eee"/>

<!-- right command panel -->
<rect x="1232" y="125" width="187" height="685" fill="#454545"/>
<path d="M1232 154H1599" stroke="#1a1a1a"/>
<rect x="1419" y="154.5" width="174" height="655" fill="#424242" stroke="#2e2e2e"/>
<g fill="#3f3f3f" stroke="#1f1f1f">
<path d="M1235 154V131Q1235 129 1238 129H1260Q1263 129 1263 131V154Z"/>
<path d="M1293 154V131Q1293 129 1296 129H1318Q1320 129 1320 131V154ZM1322 154V131Q1322 129 1325 129H1347Q1349 129 1349 131V154ZM1351 154V131Q1351 129 1354 129H1376Q1378 129 1378 131V154ZM1380 154V131Q1380 129 1383 129H1405Q1407 129 1407 131V154Z"/>
<path d="M1264 155V130Q1264 127 1267 127H1289Q1292 127 1292 130V155Z" fill="#505050"/>
</g>
<circle cx="1249" cy="140" r="4.5" fill="#ffe88c"/><path d="M1249 131V149M1240 140H1258M1243 134L1255 146M1255 134L1243 146" stroke="#e06a10" stroke-width="1.2"/><circle cx="1249" cy="140" r="3" fill="#ffc040"/>
<path d="M1272 150Q1272 136 1287 134V141Q1279 143 1279 150Z" fill="#4a9ae0"/><rect x="1269.5" y="131.5" width="18" height="19" fill="none" stroke="#ddd" stroke-dasharray="15 4"/>
<rect x="1301" y="130" width="10" height="8" fill="#bbb"/><path d="M1306 138V143M1299 149V143H1313V149" stroke="#ddd" fill="none"/><rect x="1297" y="146" width="5" height="5" fill="#ddd"/><rect x="1304" y="146" width="5" height="5" fill="#ddd"/><rect x="1311" y="146" width="5" height="5" fill="#ddd"/>
<circle cx="1338" cy="140" r="8.5" fill="none" stroke="#bbb" stroke-width="1.3"/><circle cx="1338" cy="140" r="5" fill="none" stroke="#bbb" stroke-width="1.2"/><circle cx="1338" cy="140" r="2" fill="#ccc"/><path d="M1327 134Q1324 140 1327 146M1330 132Q1327 140 1330 148" stroke="#777" fill="none"/>
<rect x="1356" y="131" width="21" height="15" fill="#e8e8e8" stroke="#999"/><path d="M1361 134H1369V142H1361Z" fill="none" stroke="#222"/><path d="M1361 151H1372M1366 146V151" stroke="#ddd" stroke-width="1.4"/>
<path d="M1384 150L1399 134" stroke="#b88a58" stroke-width="2.2"/><path d="M1393 134L1399 130L1406 136L1403 137L1399 136L1397 139Z" fill="#cfcfcf"/>

<rect x="1243" y="158" width="146" height="19" fill="#555" stroke="#222"/>
<path d="M1243 177V158H1389" stroke="#0c0c0c" fill="none" stroke-width="2"/>
<text class="l" x="1246" y="172.5" style="fill:#ddd">SShape003</text>
<rect x="1394" y="158" width="16" height="19" fill="#e095b8" stroke="#333"/>
<rect x="1243" y="184" width="164" height="23" fill="#555" stroke="#222"/>
<path d="M1243 207V184H1407" stroke="#0c0c0c" fill="none" stroke-width="2"/>
<rect x="1389" y="185" width="17" height="21" fill="#fff"/><path d="M1394 194H1402L1398 198.5Z" fill="#111"/>
<text class="l" x="1246" y="199.5" style="fill:#ddd">Modifier List</text>
<rect class="bt" x="1249.5" y="214.5" width="71" height="19"/><rect class="bt" x="1324.5" y="214.5" width="71" height="19"/><rect class="bt" x="1249.5" y="237.5" width="71" height="19"/><rect class="bt" x="1324.5" y="237.5" width="71" height="19"/><rect class="bt" x="1249.5" y="259.5" width="71" height="19"/><rect class="bt" x="1324.5" y="259.5" width="71" height="19"/><rect class="bt" x="1249.5" y="282.5" width="71" height="19"/><rect class="bt" x="1324.5" y="282.5" width="71" height="19"/>
<text class="l c" x="1285" y="228.5">Edit Poly</text><text class="l c" x="1359.5" y="228.5">Symmetry</text>
<text class="l c" x="1285" y="251">Bend</text><text class="l c" x="1359.5" y="251" style="fill:#1c1c1c">Extrude</text>
<text class="l c" x="1285" y="273">FFD 4x4x4</text><text class="l c" x="1359.5" y="273">Shell</text>
<text class="l c" x="1285" y="296">TurboSmooth</text><text class="l c" x="1359.5" y="296">Create Holes</text>
<!-- stack -->
<rect x="1244" y="312" width="159.5" height="143" fill="#565656" stroke="#fff" stroke-width="1.6"/>
<rect x="1245" y="313" width="158" height="14" fill="#484848"/>
<path d="M1245 327.5H1403M1245 343.5H1403M1245 359.5H1403M1245 375.5H1403" stroke="#8a8a8a"/>
<use href="#bulb" x="1258" y="319"/><use href="#bulb" x="1258" y="335"/><use href="#bulb" x="1258" y="351"/>
<use href="#plus" x="1275.5" y="335.5"/><use href="#plus" x="1275.5" y="351.5"/><use href="#plus" x="1255.5" y="367.5"/>
<text class="l" x="1287" y="324">TurboSmooth</text><text class="l" x="1286" y="340">Edit Poly</text><text class="l" x="1286" y="356">Lathe</text><text class="l" x="1266" y="372">Editable Spline</text>
<!-- stack tools -->
<path d="M1247 472H1254M1255 467V477H1262V467H1255" stroke="#ddd" fill="none" stroke-width="1.2"/><rect x="1256" y="468" width="5" height="8" fill="#eee" fill-opacity=".4"/>
<line class="sep" x1="1273.5" y1="461" x2="1273.5" y2="480"/><line class="sep" x1="1309.5" y1="461" x2="1309.5" y2="480"/><line class="sep" x1="1369.5" y1="461" x2="1369.5" y2="480"/>
<rect x="1279.5" y="460.5" width="22" height="23" fill="#3d3d3d" stroke="#2a2a2a"/><rect x="1288" y="466" width="5" height="14" fill="#fff"/><rect x="1287" y="466" width="7" height="2" fill="#fff"/>
<path d="M1321 466L1327 479L1335 466M1323 474L1333 470" stroke="#ddd" fill="none"/>
<path d="M1347 469A4 3 0 0 1 1355 469V478Q1351 481 1347 478Z" fill="#eee" stroke="#222" stroke-width=".5"/>
<rect x="1379" y="465" width="14" height="15" fill="#eee" stroke="#1c1c9a"/><rect x="1384" y="472" width="11" height="9" fill="#555"/><path d="M1385 474h9M1385 477h9" stroke="#eee" stroke-dasharray="2 1"/>
<path d="M1236.5 495H1411" stroke="#0a0a0a" stroke-width="2"/>
<path d="M1236 492.5H1411" stroke="#333"/>

<!-- rollout -->
<rect x="1405" y="505" width="4" height="262" fill="#111"/><rect x="1405" y="767" width="4" height="36" fill="#cfcfcf"/>
<rect x="1402" y="630" width="3" height="16" fill="#5f5f5f"/>
<rect x="1242.5" y="509.5" width="157" height="16" fill="#424242" stroke="#737373"/>
<text x="1248" y="522" style="font-size:12px;fill:#ccc">-</text>
<text class="l c" x="1320" y="521.5">TurboSmooth</text>
<path d="M1239 801V517.5H1242M1400 517.5H1403V801" class="gb"/>
<rect class="gb" x="1245.5" y="531.5" width="152" height="102"/>
<rect class="gb" x="1245.5" y="642.5" width="152" height="86"/>
<path class="gb" d="M1245.5 801V736.5H1397.5V801"/>
<rect x="1252" y="526" width="29" height="12" fill="#454545"/><rect x="1252" y="637" width="93" height="12" fill="#454545"/><rect x="1252" y="731" width="78" height="12" fill="#454545"/>
<text class="l" x="1253" y="536.5">Main</text>
<text class="l" x="1253" y="647">Surface Parameters</text>
<text class="l" x="1253" y="741">Update Options</text>

<text class="l e" x="1335" y="554">Iterations:</text>
<rect class="inp" x="1342.5" y="542.5" width="36" height="15"/><path d="M1342.5 557V542.5H1378" stroke="#0c0c0c" fill="none"/><text x="1345" y="553.5" class="l">0</text><use href="#spin" x="1381" y="542"/>
<use href="#ch" x="1254" y="566"/><use href="#tick" x="1254" y="566"/><text class="l" x="1271" y="576">Render Iters:</text>
<rect class="inp" x="1342.5" y="565.5" width="36" height="15"/><path d="M1342.5 580V565.5H1378" stroke="#0c0c0c" fill="none"/><text x="1345" y="576.5" class="l">1</text><use href="#spin" x="1381" y="565"/>
<use href="#ch" x="1254" y="594"/><use href="#tick" x="1254" y="594"/><text class="l" x="1271" y="604">Isoline Display</text>
<use href="#ch" x="1254" y="615"/><text class="l" x="1271" y="625">Explicit Normals</text>
<use href="#ch" x="1255" y="654"/><use href="#tick" x="1255" y="654"/><text class="l" x="1272" y="664">Smooth Result</text>
<text class="l" x="1254" y="681">Separate</text>
<use href="#ch" x="1285" y="688"/><text class="l" x="1302" y="698">Materials</text>
<use href="#ch" x="1285" y="706"/><use href="#tick" x="1285" y="706"/><text class="l" x="1302" y="716">Smoothing Groups</text>
<circle cx="1267" cy="753.5" r="4" fill="#4a4a4a" stroke="#1f1f1f" stroke-width="1.5"/><circle cx="1267" cy="753.5" r="2" fill="#ddd"/>
<circle cx="1267" cy="769.5" r="4" fill="#4a4a4a" stroke="#1f1f1f" stroke-width="1.5"/>
<circle cx="1267" cy="786" r="4" fill="#4a4a4a" stroke="#1f1f1f" stroke-width="1.5"/>
<text class="l" x="1279" y="758">Always</text><text class="l" x="1279" y="774">When Rendering</text><text class="l" x="1279" y="791">Manually</text>
<path d="M1232 809.5H1599" stroke="#1a1a1a"/>
<path d="M1272 801H1368" stroke="#2c2c2c"/>

<!-- time slider -->
<rect x="41" y="765" width="1190" height="17" fill="#434343"/>
<rect x="42" y="765" width="14" height="16" fill="#4a4a4a"/><text x="48" y="778" class="c" style="fill:#bbb">&lt;</text>
<rect x="57.5" y="765.5" width="123" height="15" fill="#4a4a4a" stroke="#2a2a2a"/><path d="M58 781H180" stroke="#0c0c0c"/>
<text class="l c" x="118" y="778">0 / 100</text>
<rect x="182" y="765" width="14" height="16" fill="#4a4a4a" stroke="#333"/><text x="189" y="778" class="c" style="fill:#bbb">&gt;</text>
<!-- active viewport thumb -->
<path d="M4 778Q4 768 12 768H40V808H8Q4 808 4 804Z" fill="#3c7cd0"/><rect x="7" y="772" width="31" height="27" rx="2" fill="#56606c" stroke="#222"/>
<rect x="41" y="783" width="50" height="27" fill="#454545"/>
<path d="M53 789H70V795H53ZM53 803H70V806H53ZM57 802V798M55 800L57 797L59 800M66 797V802M64 800L66 803L68 800" fill="none" stroke="#ccc"/>
<!-- ruler -->
<rect x="91" y="783" width="1091" height="26" fill="#2c2c2c"/>
<path d="M91 783.5H1182" stroke="#1a1a1a"/>
<line x1="104" y1="789" x2="1178" y2="789" stroke="#5c5c5c" stroke-width="11" stroke-dasharray="1 9.82"/>
<rect x="92" y="786" width="7" height="23" fill="#8a7d1e"/>
<g>
<text class="c" x="95.5" y="807" style="fill:#bbb;font-size:11.5px">0</text><text class="c" x="149" y="807" style="fill:#b8c4d0;font-size:11.5px">5</text><text class="c" x="203" y="807" style="fill:#b8c4d0;font-size:11.5px">10</text><text class="c" x="257" y="807" style="fill:#b8c4d0;font-size:11.5px">15</text><text class="c" x="311" y="807" style="fill:#b8c4d0;font-size:11.5px">20</text><text class="c" x="366" y="807" style="fill:#b8c4d0;font-size:11.5px">25</text><text class="c" x="420" y="807" style="fill:#b8c4d0;font-size:11.5px">30</text><text class="c" x="474" y="807" style="fill:#b8c4d0;font-size:11.5px">35</text><text class="c" x="528" y="807" style="fill:#b8c4d0;font-size:11.5px">40</text><text class="c" x="582" y="807" style="fill:#b8c4d0;font-size:11.5px">45</text><text class="c" x="636" y="807" style="fill:#b8c4d0;font-size:11.5px">50</text><text class="c" x="690" y="807" style="fill:#b8c4d0;font-size:11.5px">55</text><text class="c" x="744" y="807" style="fill:#b8c4d0;font-size:11.5px">60</text><text class="c" x="798" y="807" style="fill:#b8c4d0;font-size:11.5px">65</text><text class="c" x="852" y="807" style="fill:#b8c4d0;font-size:11.5px">70</text><text class="c" x="907" y="807" style="fill:#b8c4d0;font-size:11.5px">75</text><text class="c" x="961" y="807" style="fill:#b8c4d0;font-size:11.5px">80</text><text class="c" x="1015" y="807" style="fill:#b8c4d0;font-size:11.5px">85</text><text class="c" x="1069" y="807" style="fill:#b8c4d0;font-size:11.5px">90</text><text class="c" x="1123" y="807" style="fill:#b8c4d0;font-size:11.5px">95</text><text class="c" x="1177" y="807" style="fill:#b8c4d0;font-size:11.5px">100</text>
</g>

<!-- status -->
<rect x="0" y="809" width="1599" height="49" fill="#424242"/>
<path d="M1182 809V783" stroke="#222"/>
<rect x="2" y="813" width="96" height="27" fill="#e0c8ca"/>
<path d="M104.5 809V858" stroke="#222"/>
<rect x="108" y="814" width="619" height="21" fill="#434343" stroke="#2a2a2a"/>
<path d="M108 839.5H1031" stroke="#111"/>
<text class="l" x="113" y="829">1 Object Selected</text>
<text class="l" x="158" y="854">drag to select and move objects</text>
<ellipse cx="741" cy="825" rx="4.5" ry="6" fill="#e0768a" stroke="#eee" stroke-width=".5"/><path d="M741 831V838" stroke="#eee" stroke-width="1.6"/>
<rect x="763" y="826" width="10" height="8" fill="#d8c48c"/><path d="M765 826V823A3 3 0 0 1 771 823V826" fill="none" stroke="#eee" stroke-width="1.4"/>
<rect x="788" y="818" width="13" height="13" fill="#eee"/><circle cx="794.5" cy="824.5" r="3.6" fill="#999" stroke="#333"/><path d="M788 824.5H791M798 824.5H801M794.5 818V821M794.5 828V831" stroke="#333"/>
<text class="l" x="811" y="829">X:</text><rect class="inp" x="821.5" y="814.5" width="56" height="20"/><path d="M821.5 834V814.5H877" stroke="#0c0c0c" stroke-width="1.5" fill="none"/><text class="l" x="825" y="829">4.546cm</text><use href="#spin" x="879" y="819"/>
<text class="l" x="893" y="829">Y:</text><rect class="inp" x="904.5" y="814.5" width="56" height="20"/><path d="M904.5 834V814.5H960" stroke="#0c0c0c" stroke-width="1.5" fill="none"/><text class="l" x="907" y="829">-0.393cm</text><use href="#spin" x="962" y="819"/>
<text class="l" x="975" y="829">Z:</text><rect class="inp" x="985.5" y="814.5" width="56" height="20"/><path d="M985.5 834V814.5H1041" stroke="#0c0c0c" stroke-width="1.5" fill="none"/><text class="l" x="988" y="829">0.0cm</text><use href="#spin" x="1044" y="819"/>
<rect x="1058.5" y="814.5" width="98" height="21" fill="#434343" stroke="#2a2a2a"/><text class="l" x="1063" y="829">Grid = 25.4cm</text>
<rect x="1058.5" y="840.5" width="98" height="18" fill="#434343" stroke="#2a2a2a"/><text class="l" x="1063" y="854">Add Time Tag</text>
<rect x="1033" y="839" width="21" height="19" fill="#3a7bd5" stroke="#222"/><rect x="1038" y="844" width="12" height="12" fill="#ddd" fill-opacity=".3" stroke="#fff"/><path d="M1038 844L1041 841H1052V853L1050 856M1050 844L1052 841" stroke="#fff" fill="none"/>
<rect x="1160.5" y="813.5" width="43" height="45" fill="#434343" stroke="#2a2a2a"/>
<circle cx="1175" cy="845" r="4.5" fill="none" stroke="#0c0c0c" stroke-width="2"/><path d="M1179 845H1194M1188 845V849M1192 845V849" stroke="#0c0c0c" stroke-width="2.4"/>
<rect x="1208.5" y="813.5" width="45" height="21" fill="#4a4a4a" stroke="#2a2a2a"/><rect x="1208.5" y="835.5" width="45" height="21" fill="#4a4a4a" stroke="#2a2a2a"/>
<text class="l" x="1209" y="829.5">Auto Key</text><text class="l" x="1212" y="851">Set Key</text>
<rect x="1258" y="813" width="115" height="21" fill="#0e0e0e"/><rect x="1260" y="815" width="112" height="18" fill="url(#dd)"/><text x="1262" y="828.5" style="fill:#111;font-size:11.6px">Selected</text><path d="M1362 823H1370L1366 827.5Z" fill="#111"/>
<path d="M1262 853Q1267 855 1268 846T1273 839" fill="none" stroke="#d02020" stroke-width="1.4"/><path d="M1265 840Q1271 842 1272 850T1277 853" fill="none" stroke="#3050d0"/><use href="#cr" x="1275" y="853"/>
<rect x="1284.5" y="836.5" width="89" height="20" fill="#4a4a4a" stroke="#2a2a2a"/><text class="l c" x="1329" y="851">Key Filters...</text>
<!-- anim controls -->
<g fill="none" stroke="#bbb" stroke-width="1.1">
<path d="M1383 818V828M1393 818L1386 823L1393 828ZM1397 818V828M1397 823L1389 818"/>
<path d="M1414 818L1408 823L1414 828ZM1417 818V828M1420 818V828M1423 818V828"/>
<path d="M1435 818L1443 823L1435 828Z"/>
<path d="M1454 818V828M1457 818V828M1460 818V828M1463 818L1469 823L1463 828Z"/>
<path d="M1480 818L1487 823L1480 828ZM1487 818L1494 823L1487 828ZM1495 818V828"/>
<path d="M1383 841V851M1393 841L1387 846L1393 851ZM1395 841L1401 846L1395 851ZM1403 841V851"/>
</g>
<line class="sep" x1="1403.5" y1="817" x2="1403.5" y2="829"/><line class="sep" x1="1475.5" y1="817" x2="1475.5" y2="829"/>
<use href="#cr" x="1445" y="829"/>
<rect class="inp" x="1405.5" y="837.5" width="63" height="19"/><path d="M1405.5 856V837.5H1468" stroke="#0c0c0c" stroke-width="1.6" fill="none"/><text class="l" x="1409" y="851">0</text><use href="#spin" x="1470" y="839"/>
<line class="sep" x1="1484.5" y1="838" x2="1484.5" y2="855"/>
<circle cx="1511" cy="822" r="4.5" fill="#ddd"/><path d="M1514 826L1518 830" stroke="#bbb" stroke-width="1.6"/><path d="M1518 818H1522M1520 816V820M1518 822H1522" stroke="#bbb"/>
<path d="M1531 817h5v5h-5zM1537 817h5v5h-5zM1531 823h5v5h-5z" fill="#ddd"/><circle cx="1540" cy="826" r="3" fill="#bbb"/>
<path d="M1553 818V815H1556M1564 815H1567V818M1567 826V829H1564M1556 829H1553V826" fill="none" stroke="#ddd"/><rect x="1557" y="819" width="6" height="7" fill="#6aa04a"/>
<path d="M1577 817h6v5h-6zM1584 817h6v5h-6z" fill="#ddd"/><rect x="1576" y="822" width="9" height="7" fill="#6aa04a"/>
<rect x="1489" y="839" width="10" height="13" fill="#ddd"/><rect x="1490" y="840" width="8" height="5" fill="#2a5a9e"/><circle cx="1500" cy="852" r="4" fill="#ddd" stroke="#444"/>
<path d="M1507 840L1522 847L1507 854Z" fill="none" stroke="#bbb"/>
<path d="M1532 850L1530 842Q1531 840 1533 842L1535 846V839Q1537 838 1538 840L1539 846L1541 840Q1543 839 1544 841V848L1546 845Q1548 845 1547 848L1543 853Q1537 858 1532 850Z" fill="#f4f4f4"/>
<circle cx="1561" cy="846" r="5" fill="#8bbd6a"/><path d="M1561 846L1554 852M1561 846L1568 850M1561 846V838" stroke="#ddd"/>
<rect x="1576" y="839" width="12" height="12" fill="#ddd"/><path d="M1579 842L1585 848M1579 842V846M1579 842H1583" stroke="#111" fill="none"/>
<use href="#cr" x="1522" y="853"/><use href="#cr" x="1546" y="854"/><use href="#cr" x="1569" y="854"/>

<!-- taskbar thumb overlay -->
<path d="M104 834H152Q158 834 158 840V858H104Z" fill="#4c4c4c"/>
<path d="M104 834.5H152Q158 834.5 158 840V858" fill="none" stroke="#888"/>
<rect x="104" y="834" width="10" height="24" fill="#fff" opacity=".35"/>
<path d="M0 840Q0 834 6 834H106V858H0Z" fill="#f4f4f4"/>
<path d="M8 837H12L20 843V850L12 853H8L13 846Z" fill="#1fa4a4"/>
<text x="30" y="851" style="fill:#111;font-size:12px">M...</text>
<path d="M50 853H106" stroke="#bbb"/><path d="M50 836V853M78 836V853" stroke="#ccc"/>
<rect x="60" y="843" width="8" height="8" fill="none" stroke="#555" stroke-width="1.2"/><rect x="62" y="841" width="8" height="8" fill="none" stroke="#555" stroke-width="1.2"/>
<rect x="87" y="841" width="11" height="10" fill="none" stroke="#aaa"/><rect x="89.5" y="844" width="6" height="4" fill="none" stroke="#aaa"/>
<path d="M125 842L134 849M134 842L125 849" stroke="#f4f4f4" stroke-width="2.6"/>
</svg>
</body></html>
